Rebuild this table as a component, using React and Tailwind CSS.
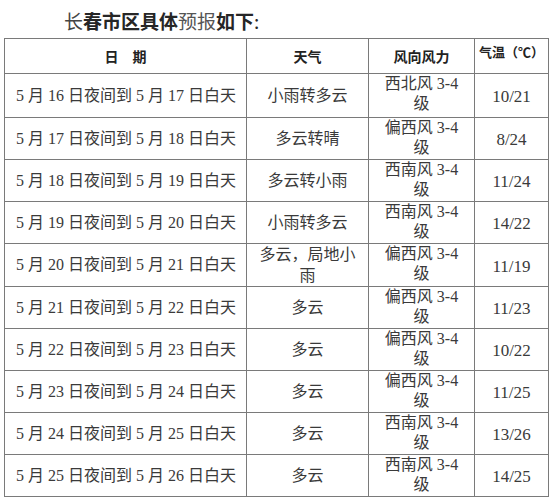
import React from "react";

const rows = [
  ["5 月 16 日夜间到 5 月 17 日白天", ["小雨转多云"], "西北风 3-4", "10/21"],
  ["5 月 17 日夜间到 5 月 18 日白天", ["多云转晴"], "偏西风 3-4", "8/24"],
  ["5 月 18 日夜间到 5 月 19 日白天", ["多云转小雨"], "西南风 3-4", "11/24"],
  ["5 月 19 日夜间到 5 月 20 日白天", ["小雨转多云"], "西南风 3-4", "14/22"],
  ["5 月 20 日夜间到 5 月 21 日白天", ["多云，局地小", "雨"], "偏西风 3-4", "11/19"],
  ["5 月 21 日夜间到 5 月 22 日白天", ["多云"], "偏西风 3-4", "11/23"],
  ["5 月 22 日夜间到 5 月 23 日白天", ["多云"], "偏西风 3-4", "10/22"],
  ["5 月 23 日夜间到 5 月 24 日白天", ["多云"], "偏西风 3-4", "11/25"],
  ["5 月 24 日夜间到 5 月 25 日白天", ["多云"], "西南风 3-4", "13/26"],
  ["5 月 25 日夜间到 5 月 26 日白天", ["多云"], "西南风 3-4", "14/25"],
];

const font = {
  fontFamily: '"Liberation Serif", "Noto Sans CJK SC", serif',
};

export default function App() {
  return (
    <div className="w-[550px] h-[500px] bg-white overflow-hidden" style={font}>
      <div
        className="h-[38px] pl-[64px] pt-[8px] text-[19px] leading-[26px] text-[#262626]"
        style={{ fontFamily: '"Noto Sans CJK SC", sans-serif' }}
      >
        <span className="font-normal text-[#444]">长</span>
        <span className="font-bold">春市区具体</span>
        <span className="font-normal text-[#555]">预报</span>
        <span className="font-bold">如下</span>
        <span>:</span>
      </div>
      <table className="ml-[4px] w-[544px] table-fixed border-collapse text-[#3a3a3a]">
        <colgroup>
          <col className="w-[242px]" />
          <col className="w-[122px]" />
          <col className="w-[106px]" />
          <col className="w-[74px]" />
        </colgroup>
        <thead>
          <tr className="h-[35px] text-[14px] font-bold text-[#222]" style={{ fontFamily: '"Noto Sans CJK SC", sans-serif' }}>
            <th className="border border-[#7a7a7a] font-bold">日　期</th>
            <th className="border border-[#7a7a7a] font-bold">天气</th>
            <th className="border border-[#7a7a7a] font-bold">风向风力</th>
            <th className="border border-[#7a7a7a] align-top pt-[3px] text-[13px] font-bold whitespace-nowrap">气温（℃）</th>
          </tr>
        </thead>
        <tbody className="text-[16px]">
          {rows.map((r, i) => (
            <tr key={i} className={i === 0 ? "h-[44px]" : "h-[42px]"}>
              <td className="border border-[#7a7a7a] pl-[11px] whitespace-nowrap leading-[20px]">
                {r[0]}
              </td>
              <td className="border border-[#7a7a7a] text-center leading-[21px]">
                {r[1].map((t, j) => (
                  <div key={j}>{t}</div>
                ))}
              </td>
              <td className="border border-[#7a7a7a] text-center leading-[20px] align-top p-0">
                <div className="h-[20px]">{r[2]}</div>
                <div className="h-[20px]">级</div>
              </td>
              <td className="border border-[#7a7a7a] text-center text-[17px] pt-[3px] leading-[20px]">{r[3]}</td>
            </tr>
          ))}
        </tbody>
      </table>
    </div>
  );
}
